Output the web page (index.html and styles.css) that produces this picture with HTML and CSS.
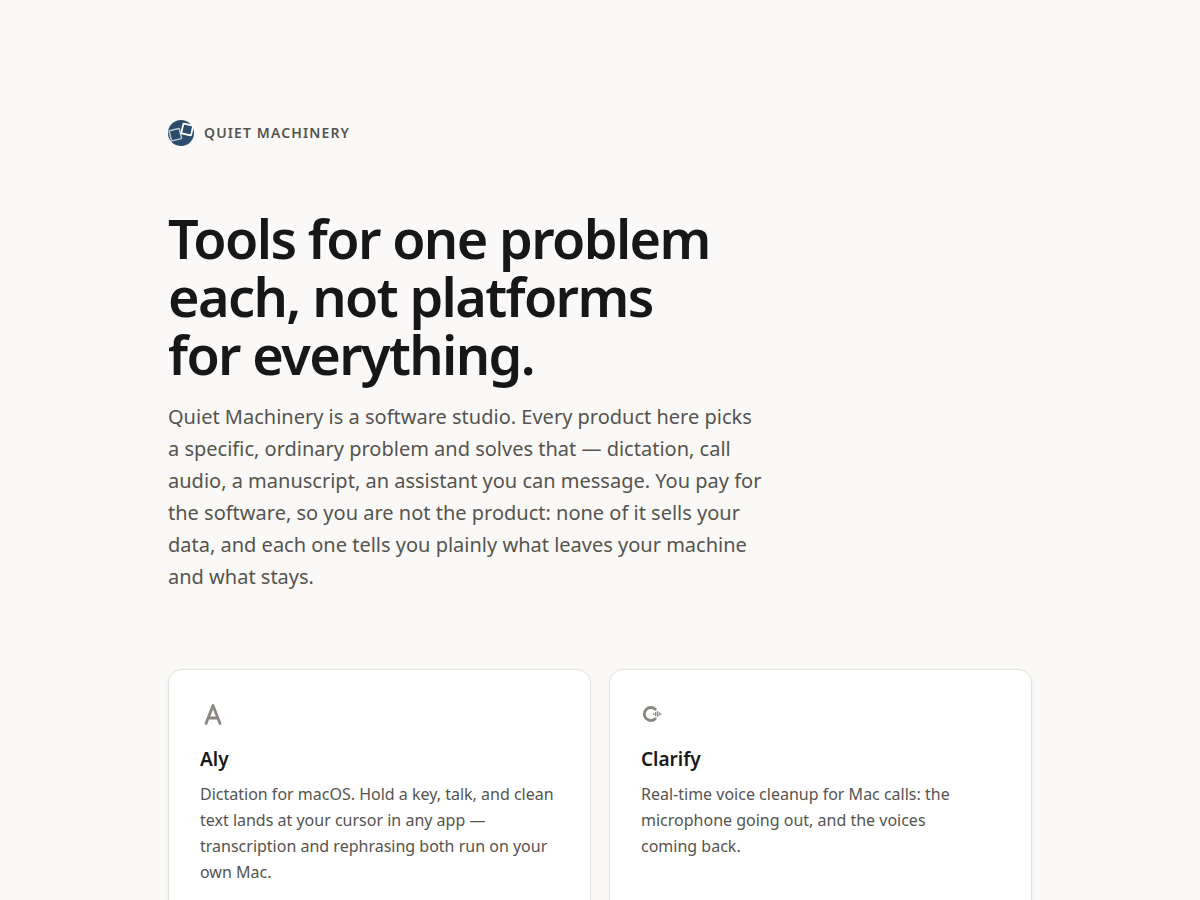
FILE: index.html
```html
<!DOCTYPE html>
<html lang="en">
<head>
<meta charset="utf-8">
<meta name="viewport" content="width=device-width, initial-scale=1">
<title>Quiet Machinery</title>
<link rel="stylesheet" href="styles.css">
</head>
<body>
<main class="page">
  <header class="brand">
    <svg class="brand-mark" viewBox="0 0 26 26" aria-hidden="true">
      <circle cx="13" cy="13" r="13" fill="#2b4c6b"/>
      <rect x="2.200" y="9.500" width="10.400" height="10.400" rx=".5" fill="none" stroke="#bcc8d3" stroke-width="1.500" transform="rotate(-14 7.400 14.700)"/>
      <rect x="14.200" y="4.500" width="10" height="10" rx=".5" fill="#2b4c6b" stroke="#fff" stroke-width="1.800" transform="rotate(13 19.200 9.500)"/>
    </svg>
    <span class="brand-name">Quiet Machinery</span>
  </header>
  <section class="hero">
    <h1 class="hero-title">Tools for one problem each, not platforms for everything.</h1>
    <p class="hero-text">Quiet Machinery is a software studio. Every product here picks a specific, ordinary problem and solves that — dictation, call audio, a manuscript, an assistant you can message. You pay for the software, so you are not the product: none of it sells your data, and each one tells you plainly what leaves your machine and what stays.</p>
  </section>
  <section class="cards">
    <article class="card">
      <svg class="card-icon" viewBox="0 0 26 26" aria-hidden="true"><path d="M6 22.500 13 4.500l7 18M8.500 17h9" fill="none" stroke="#8a877f" stroke-width="2.800" stroke-linecap="round" stroke-linejoin="round"/></svg>
      <h2 class="card-title">Aly</h2>
      <p class="card-text">Dictation for macOS. Hold a key, talk, and clean text lands at your cursor in any app — transcription and rephrasing both run on your own Mac.</p>
    </article>
    <article class="card">
      <svg class="card-icon" viewBox="0 0 26 26" aria-hidden="true">
        <path d="M14.300 8.300a6.500 6.500 0 1 0 0 9.400" fill="none" stroke="#8a877f" stroke-width="2.800" stroke-linecap="round"/>
        <path d="M12.700 12.500v1M14.500 11.500v3M16.300 10.500v5M18.100 11.500v3M19.800 12.500v1" fill="none" stroke="#8a877f" stroke-width="1.200" stroke-linecap="round"/>
      </svg>
      <h2 class="card-title">Clarify</h2>
      <p class="card-text">Real-time voice cleanup for Mac calls: the microphone going out, and the voices coming back.</p>
    </article>
  </section>
</main>
</body>
</html>
```

FILE: styles.css
```css
* { box-sizing: border-box; }
body {
  margin: 0;
  background: #faf9f7;
  color: #17171a;
  font-family: "Noto Sans", sans-serif;
}
.page {
  max-width: 912px;
  margin: 0 auto;
  padding: 120px 24px;
}
.brand {
  display: flex;
  align-items: center;
  gap: 10px;
  margin-bottom: 63px;
}
.brand-mark { width: 26px; height: 26px; }
.brand-name {
  font-size: 14px;
  font-weight: 600;
  line-height: 18px;
  letter-spacing: 0.08em;
  text-transform: uppercase;
  color: #55544f;
}
.hero { margin-bottom: 76px; }
.hero-title {
  max-width: 560px;
  margin: 0 0 18px;
  font-size: 54px;
  font-weight: 600;
  line-height: 58px;
  letter-spacing: -0.03em;
}
.hero-text {
  max-width: 598px;
  margin: 0;
  font-size: 20px;
  line-height: 32px;
  color: #55544f;
}
.cards {
  display: grid;
  grid-template-columns: repeat(2, 1fr);
  gap: 18px;
}
.card {
  padding: 31px;
  background: #fff;
  border: 1px solid #e4e2dc;
  border-radius: 14px;
  box-shadow: 0 1px 3px rgba(0, 0, 0, 0.05);
}
.card-icon { display: block; width: 26px; height: 26px; margin-bottom: 18px; }
.card-title { margin: 0 0 8px; font-size: 19px; line-height: 28px; font-weight: 600; }
.card-text { margin: 0; font-size: 16px; line-height: 26px; color: #55544f; text-wrap: pretty; }
```
